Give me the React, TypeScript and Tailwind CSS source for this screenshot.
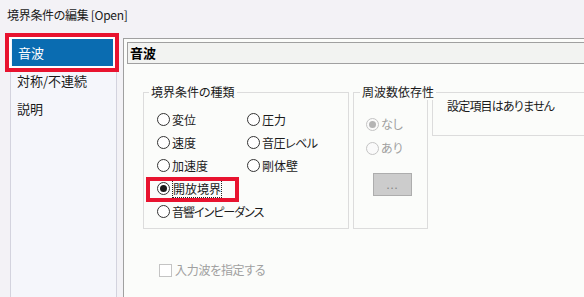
import React from "react";

function Radio({
  label,
  checked = false,
  disabled = false,
  focused = false,
  rowClass = "h-[23px]",
  textClass = "",
}: {
  label: string;
  checked?: boolean;
  disabled?: boolean;
  focused?: boolean;
  rowClass?: string;
  textClass?: string;
}) {
  return (
    <div className={`flex items-center ${rowClass}`}>
      <span
        className={`w-[13px] h-[13px] rounded-full border flex items-center justify-center shrink-0 ${
          disabled ? "border-[#c4c4c4] bg-[#fafafa]" : "border-[#333333] bg-white"
        }`}
      >
        {checked && (
          <span
            className={`w-[7px] h-[7px] rounded-full ${
              disabled ? "bg-[#b4b4b4]" : "bg-[#1a1a1a]"
            }`}
          />
        )}
      </span>
      <span
        className={`ml-[2px] whitespace-nowrap leading-[16px] ${textClass} ${
          disabled ? "text-[#a0a0a0]" : "text-[#1a1a1a]"
        } ${focused ? "border border-dotted border-[#222222]" : ""}`}
      >
        {label}
      </span>
    </div>
  );
}

export default function App() {
  return (
    <div className="relative w-[584px] h-[297px] overflow-hidden bg-[#f3f2f6] text-[#1a1a1a] font-['Noto_Sans_CJK_JP','Noto_Sans',sans-serif] [font-feature-settings:'palt']">
      {/* title */}
      <div className="h-[38px] pl-[7px] pt-[6px] text-[12px] leading-[18px] whitespace-nowrap tracking-[-0.3px]">
        境界条件の編集 [Open]
      </div>

      <div className="flex h-[259px]">
        {/* sidebar */}
        <div className="ml-[10px] w-[107px] shrink-0 border-x border-[#d3d3de] bg-[#f5f6fb] pt-[1px] text-[13px] whitespace-nowrap">
          <div className="mx-[1px] h-[28px] bg-[#0a6cb1] text-white flex items-center pl-[6px]">
            音波
          </div>
          <div className="h-[28px] flex items-center pl-[6px]">対称/不連続</div>
          <div className="h-[28px] flex items-center pl-[6px]">説明</div>
        </div>

        {/* content panel */}
        <div className="ml-[6px] flex-1 min-w-0 overflow-hidden border-l border-t border-[#a0a0a0] bg-[#fbfcfa] pl-[3px] pt-[3px] text-[12px]">
          <div className="h-[22px] border border-r-0 border-[#a0a0a0] bg-[#f2f3f1] flex items-center pl-[2px] text-[13px] font-bold text-black">
            音波
          </div>

          <div className="flex mt-[28px] ml-[16px]">
            {/* group 1 */}
            <div className="relative w-[206px] h-[137px] border border-[#dcdcdc] shrink-0">
              <span className="absolute -top-[9px] left-[5px] px-[2px] bg-[#fbfcfa] leading-[16px] whitespace-nowrap">
                境界条件の種類
              </span>
              <div className="pt-[15px] pl-[13px] grid grid-cols-[90px_90px]">
                <Radio label="変位" />
                <Radio label="圧力" />
                <Radio label="速度" />
                <Radio label="音圧レベル" textClass="tracking-[-0.5px]" />
                <Radio label="加速度" />
                <Radio label="剛体壁" />
                <Radio label="開放境界" checked focused />
                <div />
                <div className="col-span-2">
                  <Radio label="音響インピーダンス" textClass="tracking-[-1px]" />
                </div>
              </div>
            </div>

            {/* group 2 */}
            <div className="relative ml-[4px] w-[75px] h-[137px] border border-[#dcdcdc] shrink-0">
              <span className="absolute -top-[9px] left-[6px] px-[2px] bg-[#fbfcfa] leading-[16px] whitespace-nowrap">
                周波数依存性
              </span>
              <div className="pt-[19px] pl-[12px]">
                <Radio label="なし" checked disabled rowClass="h-[24px]" />
                <Radio label="あり" disabled rowClass="h-[24px]" />
                <div className="mt-[13px] ml-[7px] w-[39px] h-[23px] bg-[#cccccc] border border-[#adadad] flex items-center justify-center text-[#858585] text-[11px] leading-none tracking-[1px]">
                  ...
                </div>
              </div>
            </div>

            {/* info */}
            <div className="ml-[4px] w-[200px] h-[44px] border-l border-t border-b border-[#dcdcdc] pl-[14px] pt-[5px] leading-[16px] shrink-0 whitespace-nowrap tracking-[-0.8px]">
              設定項目はありません
            </div>
          </div>

          <div className="mt-[33px] ml-[32px] flex items-center">
            <span className="w-[13px] h-[13px] border border-[#c4c4c4] bg-white shrink-0" />
            <span className="ml-[3px] text-[#a0a0a0] leading-[16px] whitespace-nowrap tracking-[-0.3px]">入力波を指定する</span>
          </div>
        </div>
      </div>

      {/* annotation boxes */}
      <div className="absolute left-[5px] top-[33px] w-[114px] h-[39px] border-4 border-[#e8132f] shadow-[inset_0_0_0_2px_white]" />
      <div className="absolute left-[146px] top-[177px] w-[93px] h-[25px] border-4 border-[#e8132f]" />
    </div>
  );
}
